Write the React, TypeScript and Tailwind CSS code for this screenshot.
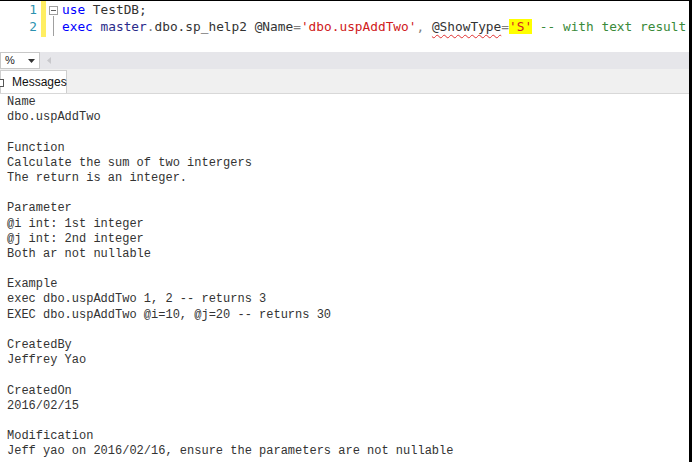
import React from "react";

const lines = [
  "Name",
  "dbo.uspAddTwo",
  "",
  "Function",
  "Calculate the sum of two intergers",
  "The return is an integer.",
  "",
  "Parameter",
  "@i int: 1st integer",
  "@j int: 2nd integer",
  "Both ar not nullable",
  "",
  "Example",
  "exec dbo.uspAddTwo 1, 2 -- returns 3",
  "EXEC dbo.uspAddTwo @i=10, @j=20 -- returns 30",
  "",
  "CreatedBy",
  "Jeffrey Yao",
  "",
  "CreatedOn",
  "2016/02/15",
  "",
  "Modification",
  "Jeff yao on 2016/02/16, ensure the parameters are not nullable",
];

export default function App() {
  const mono = { fontFamily: '"DejaVu Sans Mono", monospace' };
  return (
    <div className="w-[692px] h-[462px] bg-white border-t border-black border-r-[3px] overflow-hidden flex flex-col">
      {/* Editor */}
      <div className="h-[51px] flex relative">
        <div className="w-[40px] flex flex-col items-end pr-[3px] text-[12.8px] leading-[17px] text-[#2b91af]" style={mono}>
          <div>1</div>
          <div>2</div>
        </div>
        <div className="w-[5px] h-[36px] bg-[#ffee62] ml-[1px]" />
        <div className="w-[16px] relative">
          <div className="absolute left-[3px] top-[5px] w-[9px] h-[9px] border border-[#a0a0a0] bg-white flex items-center justify-center">
            <div className="w-[5px] h-px bg-[#606060]" />
          </div>
          <div className="absolute left-[7px] top-[15px] w-px h-[20px] bg-[#a0a0a0]" />
        </div>
        <div className="text-[12.8px] leading-[17px] whitespace-pre text-[#333]" style={mono}>
          <div>
            <span className="text-[#0000ff]">use</span> TestDB;
          </div>
          <div>
            <span className="text-[#0000ff]">exec</span> <span className="text-[#2a2a8a]">master</span>
            <span className="text-[#808080]">.</span>dbo.sp_help2 @Name<span className="text-[#808080]">=</span>
            <span className="text-[#d02020]">'dbo.uspAddTwo'</span>
            <span className="text-[#808080]">, </span>
            <span className="underline decoration-wavy decoration-[#e03030] underline-offset-[3px] decoration-1">@ShowType</span>
            <span className="text-[#808080]">=</span>
            <span className="text-[#d02020] bg-[#ffff00]">'S'</span>{" "}
            <span className="text-[#3a8a3a]">-- with text result</span>
          </div>
        </div>
      </div>
      {/* Toolbar */}
      <div className="h-[17px] flex bg-[#e6e6ea]">
        <div className="w-[40px] h-[17px] bg-white border border-[#c8c8c8] flex items-center justify-between pl-[4px] pr-[4px] text-[11px] text-[#222]" style={{ fontFamily: '"Liberation Sans", sans-serif' }}>
          <span>%</span>
          <svg width="7" height="4" viewBox="0 0 7 4">
            <path d="M0 0h7L3.5 4z" fill="#333" />
          </svg>
        </div>
        <div className="ml-[7px] flex items-center">
          <svg width="4" height="7" viewBox="0 0 4 7">
            <path d="M4 0v7L0 3.5z" fill="#c8c8cc" />
          </svg>
        </div>
      </div>
      {/* Tabs */}
      <div className="h-[25px] flex items-end bg-[#f0f0f0] border-b border-[#d8d8d8]">
        <div className="h-[23px] w-[67px] bg-white border border-b-0 border-[#cfcfcf] flex items-center relative">
          <div className="absolute left-[-4px] top-[8px] w-[7px] h-[8px] border border-[#555] bg-white" />
          <span className="ml-[11px] text-[12px] text-[#111]" style={{ fontFamily: '"Liberation Sans", sans-serif' }}>
            Messages
          </span>
        </div>
      </div>
      {/* Output */}
      <div className="flex-1 bg-white pl-[7px] pt-[1px] text-[12px] leading-[15.2px] whitespace-pre text-[#333]" style={{ fontFamily: '"Liberation Mono", monospace' }}>
        {lines.map((l, i) => (
          <div key={i} className="h-[15.2px]">{l}</div>
        ))}
      </div>
    </div>
  );
}
